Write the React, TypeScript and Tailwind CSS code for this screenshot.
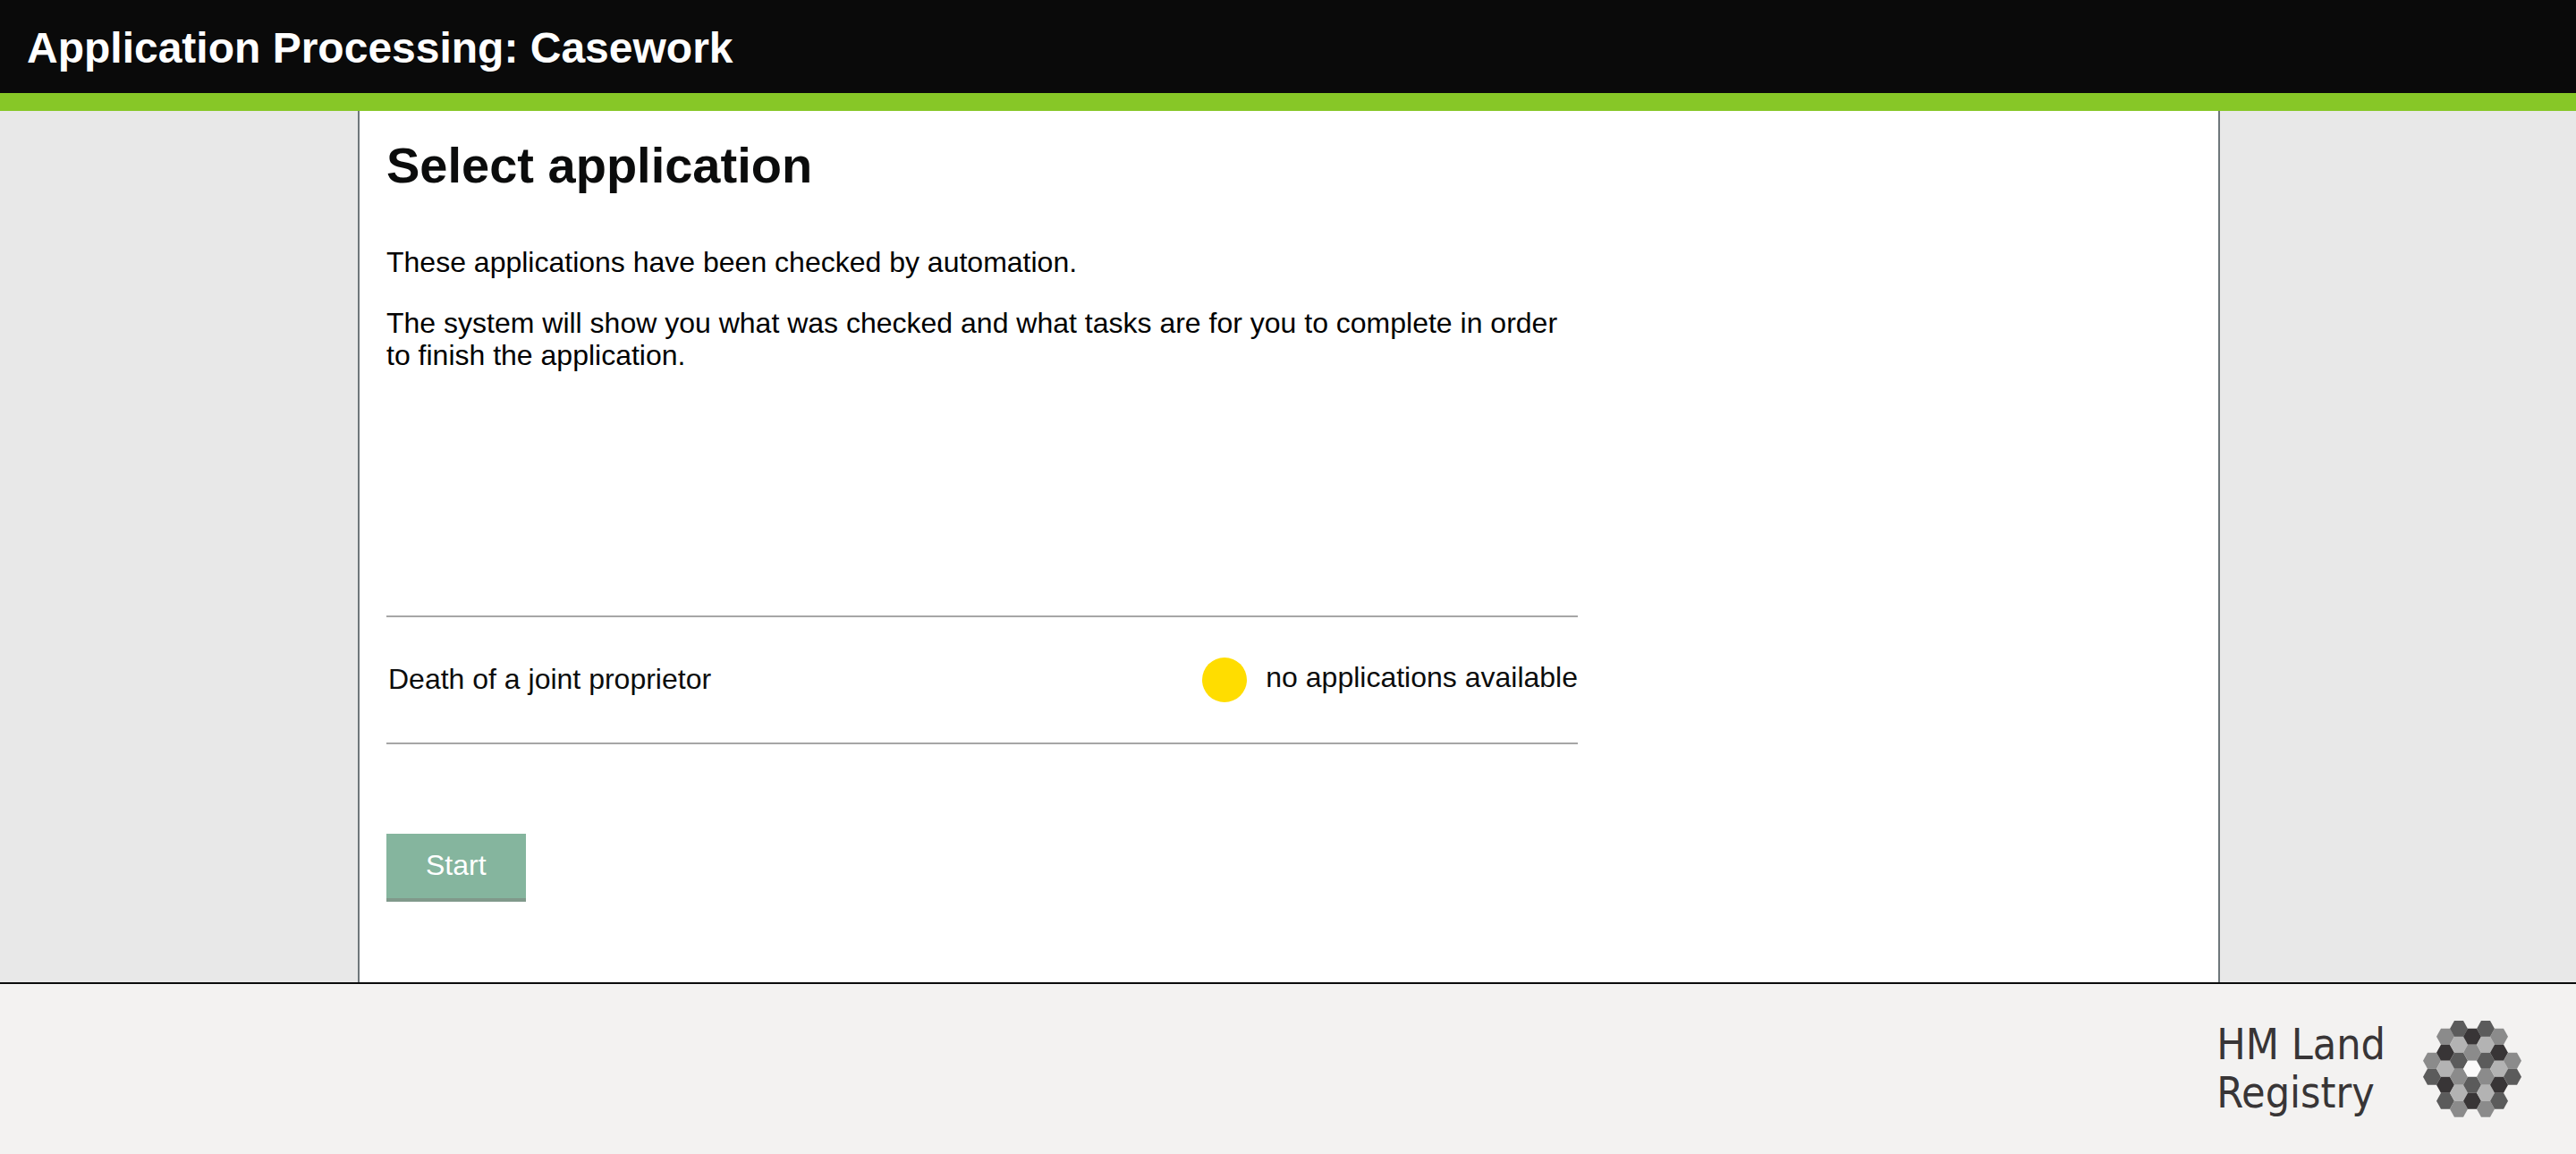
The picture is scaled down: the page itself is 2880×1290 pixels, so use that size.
const HEXAGONS: { x: number; y: number[]; fill: string[] }[] = [
  { x: 86, y: [197, 251], fill: ['#8b8b8b', '#5b5b5b'] },
  { x: 131, y: [116, 170, 224, 278, 332], fill: ['#8b8b8b', '#383536', '#b3b3b3', '#383536', '#5b5b5b'] },
  { x: 176, y: [90, 143, 197, 251, 305, 359], fill: ['#5b5b5b', '#b3b3b3', '#5b5b5b', '#8b8b8b', '#b3b3b3', '#8b8b8b'] },
  { x: 221, y: [116, 170, 224, 278, 332], fill: ['#383536', '#8b8b8b', '#fbfafa', '#5b5b5b', '#383536'] },
  { x: 266, y: [90, 143, 197, 251, 305, 359], fill: ['#5b5b5b', '#b3b3b3', '#5b5b5b', '#8b8b8b', '#b3b3b3', '#8b8b8b'] },
  { x: 311, y: [116, 170, 224, 278, 332], fill: ['#8b8b8b', '#383536', '#b3b3b3', '#383536', '#5b5b5b'] },
  { x: 356, y: [197, 251], fill: ['#8b8b8b', '#5b5b5b'] },
];

function HexLogo() {
  return (
    <svg viewBox="56 60 330 330" className="size-[110px]" aria-hidden="true">
      {HEXAGONS.flatMap(({ x, y, fill }) =>
        y.map((cy, i) => (
          <path key={`${x}-${cy}`} fill={fill[i]} d={`M${x - 30} ${cy}l15 -27h30l15 27l-15 27h-30z`} />
        )),
      )}
    </svg>
  );
}

export default function App() {
  return (
    <div className="flex min-h-screen flex-col bg-[#e8e8e8] font-['Liberation_Sans',Arial,sans-serif] text-[32px] leading-9 text-[#0b0c0c]">
      <header className="border-b-20 border-[#87c727] bg-[#0a0a0a] px-[30px] pt-[26px] pb-[22px]">
        <p className="text-5xl leading-14 font-bold text-white">Application Processing: Casework</p>
      </header>

      <div className="flex flex-1 pl-0.5">
        <main className="mx-auto w-full max-w-[2082px] border-x-2 border-[#6f777b] bg-white px-[30px] pt-[29px] pb-[88px]">
          <h1 className="text-[56px] leading-16 font-bold">Select application</h1>
          <div className="max-w-[1332px]">
            <p className="mt-[58px] text-black">These applications have been checked by automation.</p>
            <p className="mt-8 text-black">
              The system will show you what was checked and what tasks are for you to complete in order to finish the
              application.
            </p>
            <div className="mt-[273px] flex h-36 items-center justify-between border-y-2 border-[#a6a6a6]">
              <span className="pb-0.5 pl-0.5">Death of a joint proprietor</span>
              <span className="flex items-center gap-[21px]">
                <span className="size-[50px] rounded-full bg-[#ffdd00]" />
                <span className="pb-1.5">no applications available</span>
              </span>
            </div>
            <button
              type="button"
              className="mt-[100px] block h-[76px] border-b-4 border-[#80998b] bg-[#85b59e] px-11 pb-0.5 text-white"
            >
              Start
            </button>
          </div>
        </main>
      </div>

      <footer className="flex items-start justify-end gap-[42px] border-t-2 border-[#0b0c0c] bg-[#f3f2f1] pt-10 pr-[61px] pb-10">
        <div className="font-['DejaVu_Sans_Condensed','DejaVu_Sans',sans-serif] text-5xl leading-[54px] text-[#383536]">
          <p>HM Land</p>
          <p>Registry</p>
        </div>
        <HexLogo />
      </footer>
    </div>
  );
}
